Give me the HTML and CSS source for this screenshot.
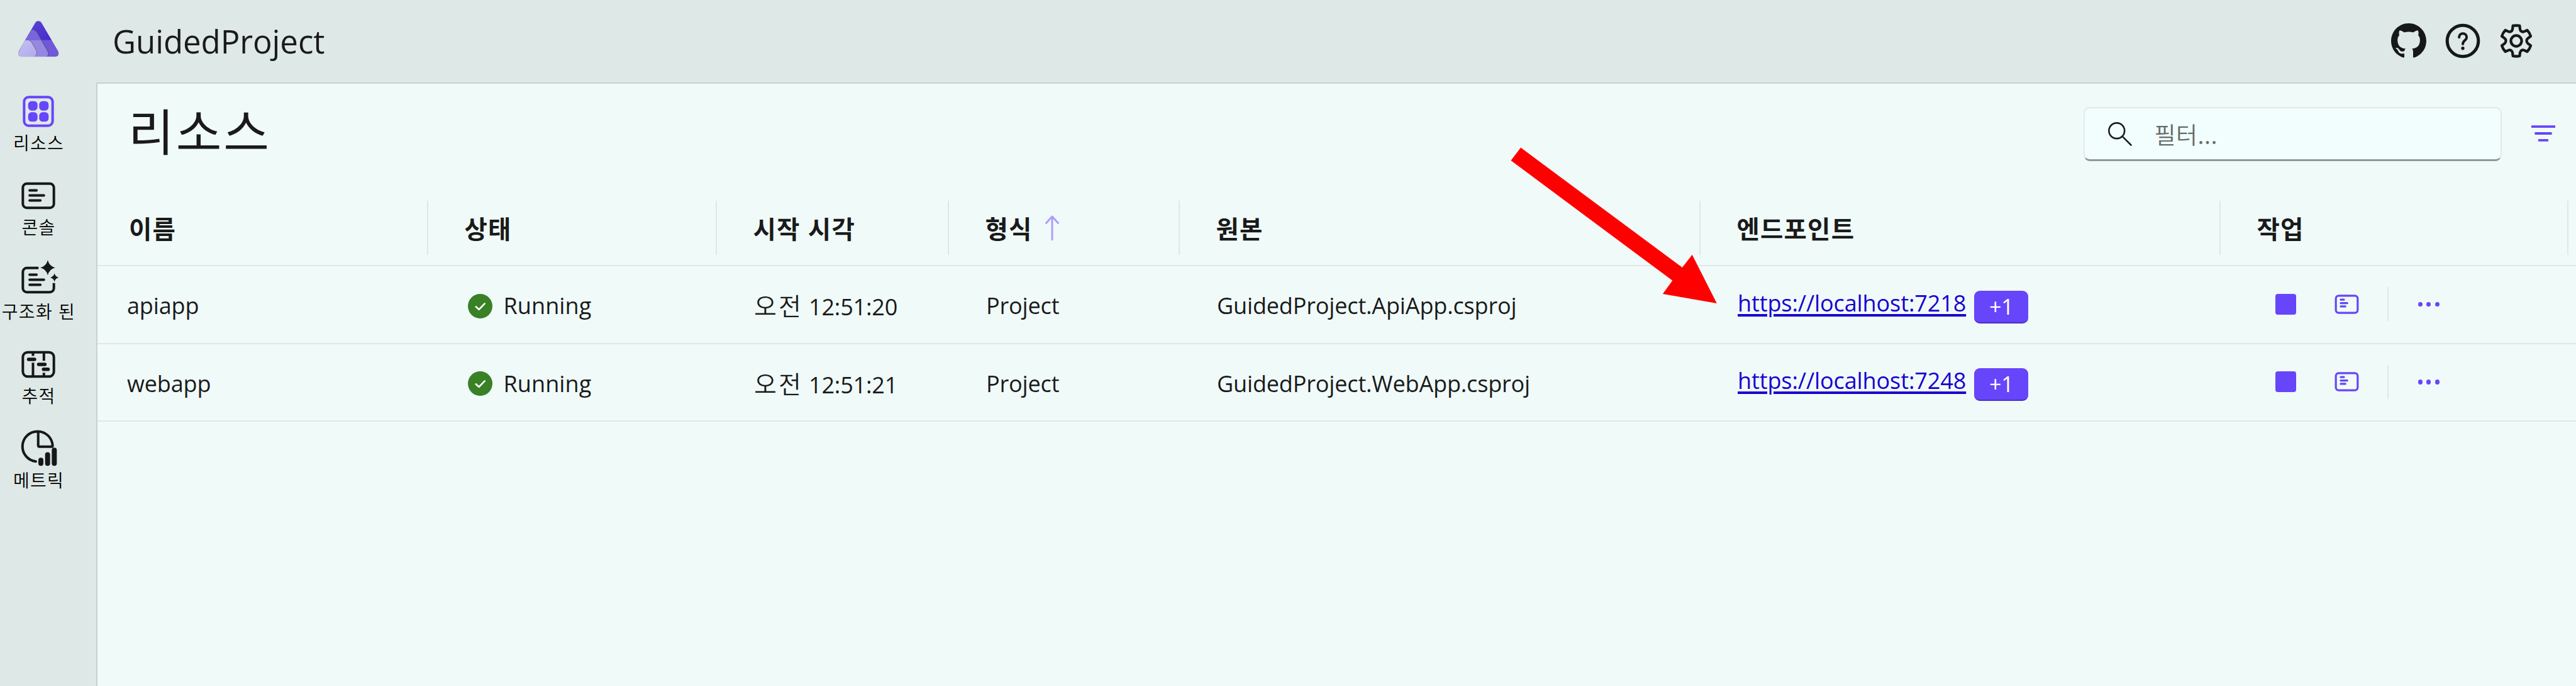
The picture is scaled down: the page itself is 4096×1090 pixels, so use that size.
FILE: index.html
```
<!DOCTYPE html>
<html lang="ko">
<head>
<meta charset="utf-8">
<title>GuidedProject</title>
<link rel="stylesheet" href="styles.css">
</head>
<body>
<svg class="defs" aria-hidden="true">
  <symbol id="log" viewBox="0 0 24 24">
    <rect x="2.75" y="4.75" width="18.5" height="14.5" rx="2.4"/>
    <path d="M6.9 8.1h2.7M6.9 11h5.500M6.900 13.800h3.900"/>
  </symbol>
  <symbol id="check" viewBox="0 0 20 20">
    <circle cx="10" cy="10" r="10" fill="#3a8026"/>
    <path d="M6.5 10.4l2.5 2.3 4.7-4.8" fill="none" stroke="#fff" stroke-width="1.35" stroke-linecap="round" stroke-linejoin="round"/>
  </symbol>
</svg>
<div class="app">
  <nav class="sidebar">
    <div class="logo">
      <svg viewBox="0 0 270 255">
        <defs>
          <linearGradient id="ga" x1="0" y1="0" x2="1" y2="1"><stop offset="0" stop-color="#6049d6"/><stop offset="1" stop-color="#4326c8"/></linearGradient>
          <linearGradient id="gb" x1="0" y1="0" x2="1" y2="1"><stop offset="0" stop-color="#c6c3f1"/><stop offset="1" stop-color="#b0a8ea"/></linearGradient>
          <clipPath id="tri"><path d="M135 33q11 0 17 11L236 187q12 26-14 30H50q-26-4-15-30L118 44q6-11 17-11z"/></clipPath>
        </defs>
        <g clip-path="url(#tri)">
          <rect x="20" y="25" width="230" height="107" fill="url(#ga)"/>
          <rect x="20" y="132" width="230" height="90" fill="#6f59d7"/>
          <path d="M60 120L90 82q22-10 37 8l24 42H40z" fill="#7966d8"/>
          <path d="M40 132h111l33 58q8 18-6 30H30z" fill="#9687e1"/>
          <path d="M112 80q10 1 17 12l55 98q7 17-6 27" fill="none" stroke="#4e4496" stroke-width="3"/>
          <path d="M20 220l45-85q22-8 36 10l25 42q6 18-10 32z" fill="url(#gb)"/>
          <path d="M90 133q9 4 14 14l23 42q4 16-9 28" fill="none" stroke="#6a63a4" stroke-width="3"/>
        </g>
      </svg>
    </div>
    <a class="nav active">
      <svg viewBox="0 0 24 24"><rect x="3.5" y="3.5" width="17" height="17" rx="2.7"/><g class="solid"><rect x="5.9" y="5.9" width="5.6" height="5.6" rx="2"/><rect x="12.5" y="5.9" width="5.6" height="5.6" rx="2"/><rect x="5.9" y="12.5" width="5.6" height="5.6" rx="2"/><rect x="12.5" y="12.5" width="5.6" height="5.6" rx="2"/></g></svg>
      <span>리소스</span>
    </a>
    <a class="nav">
      <svg viewBox="0 0 24 24"><rect x="2.75" y="4.75" width="18.5" height="14.5" rx="2.4"/><path d="M6.8 8.8h4.1M6.8 11.8h8.5M6.8 14.8h6.4"/></svg>
      <span>콘솔</span>
    </a>
    <a class="nav">
      <svg viewBox="0 0 24 24"><path class="butt" d="M12.1 4.75H5.15a2.4 2.4 0 0 0-2.4 2.4v9.7a2.4 2.4 0 0 0 2.4 2.4h13.7a2.4 2.4 0 0 0 2.4-2.4V13.8"/><path d="M6.8 8.8h4.1M6.8 11.8h8.5M6.8 14.8h6.4"/><path class="solid" d="M17.6.1Q18.5 3.7 22 4.6Q18.5 5.5 17.6 9.1Q16.7 5.5 13.2 4.6Q16.7 3.7 17.6.1zM21.6 8Q22.1 10 24.1 10.5Q22.1 11 21.6 13Q21.1 11 19.1 10.5Q21.1 10 21.6 8z"/></svg>
      <span>구조화 된</span>
    </a>
    <a class="nav">
      <svg viewBox="0 0 24 24"><rect x="2.75" y="4.75" width="18.5" height="14.5" rx="2.9"/><path class="butt" d="M8.8 4.5v2.4M8.8 11v8.5M15.3 4.5v5.3M15.3 17v2.5"/><path class="thick" d="M6.2 9h3.5M12.2 12h3.7M15.1 14.9h2.7"/></svg>
      <span>추적</span>
    </a>
    <a class="nav">
      <svg viewBox="0 0 24 24"><path d="M10.5 19.6A9 9 0 1 1 20.5 10.1q0 .7-.7.7h-7.1q-.8 0-.8-.8V1.8"/><path class="bars" d="M13.5 18.8v1.9M17.5 15.6v5.1M21.5 12.8v7.9"/></svg>
      <span>메트릭</span>
    </a>
  </nav>
  <div class="column">
    <header class="topbar">
      <div class="brand">GuidedProject</div>
      <div class="tools">
        <svg class="github" viewBox="0 0 16 16"><path d="M8 0C3.58 0 0 3.58 0 8c0 3.54 2.29 6.53 5.47 7.59.4.07.55-.17.55-.38 0-.19-.01-.82-.01-1.49-2.01.37-2.53-.49-2.69-.94-.09-.23-.48-.94-.82-1.13-.28-.15-.68-.52-.01-.53.63-.01 1.08.58 1.23.82.72 1.21 1.87.87 2.33.66.07-.52.28-.87.51-1.07-1.78-.2-3.64-.89-3.64-3.95 0-.87.31-1.59.82-2.15-.08-.2-.36-1.02.08-2.12 0 0 .67-.21 2.2.82.64-.18 1.32-.27 2-.27s1.36.09 2 .27c1.53-1.04 2.2-.82 2.2-.82.44 1.1.16 1.92.08 2.12.51.56.82 1.27.82 2.15 0 3.07-1.87 3.75-3.65 3.95.29.25.54.73.54 1.48 0 1.07-.01 1.93-.01 2.2 0 .21.15.46.55.38A8.01 8.01 0 0 0 16 8c0-4.42-3.58-8-8-8z"/></svg>
        <svg class="line help" viewBox="0 0 24 24"><circle cx="12" cy="12" r="9.3"/><path d="M9.8 9.8a2.25 2.25 0 1 1 4.5 0c0 1.9-2.3 2-2.3 4.1"/><circle class="dot" cx="12" cy="16.4" r="1"/></svg>
        <svg class="line gear" viewBox="0 0 24 24"><path d="M12.012 2.75c.734.008 1.4.093 2.0.223l.25 2.056a1.75 1.75 0 0 0 2.427 1.4l1.85-.815a9.3 9.3 0 0 1 2.1 3.6l-1.641 1.216a1.95 1.95 0 0 0 0 3.14l1.643 1.2a9.3 9.3 0 0 1-2.1 3.6l-1.857-.8a1.75 1.75 0 0 0-2.426 1.4l-.25 2.0a9.5 9.5 0 0 1-4.0 0l-.25-2.0a1.75 1.75 0 0 0-2.425-1.4l-1.856.8a9.3 9.3 0 0 1-2.1-3.6l1.643-1.2a1.95 1.95 0 0 0 0-3.14l-1.643-1.2a9.3 9.3 0 0 1 2.1-3.6l1.85.8a1.75 1.75 0 0 0 2.43-1.4l.25-2.056c.7-.15 1.3-.223 2.001-.223z"/><circle cx="12" cy="12" r="3.2"/></svg>
      </div>
    </header>
    <main class="main">
      <div class="pagehead">
        <h1>리소스</h1>
        <div class="filters">
          <label class="search">
            <svg viewBox="0 0 24 24"><circle cx="9" cy="9" r="7.1"/><path d="M14.2 14.2L22 22"/></svg>
            <span>필터...</span>
          </label>
          <svg class="filter" viewBox="0 0 40 26"><path d="M0 1.500h40M5.700 13h28.600M11.600 24.500h16.800"/></svg>
        </div>
      </div>
      <div class="row head">
        <div>이름</div>
        <div>상태</div>
        <div>시작 시각</div>
        <div><span>형식</span><svg class="sort" viewBox="0 0 22 40"><path d="M11 39V2M1.5 12.500L11 2l9.500 10.500"/></svg></div>
        <div>원본</div>
        <div>엔드포인트</div>
        <div>작업</div>
      </div>
      <div class="row item">
        <div>apiapp</div>
        <div><svg class="status"><use href="#check"/></svg><span class="running">Running</span></div>
        <div><span><span class="ko">오전</span> 12:51:20</span></div>
        <div>Project</div>
        <div>GuidedProject.ApiApp.csproj</div>
        <div><a class="link">https://localhost:7218</a><span class="badge">+1</span></div>
        <div class="actions"><i class="stop"></i><svg class="log"><use href="#log"/></svg><i class="sep"></i><i class="dots"><b></b><b></b><b></b></i></div>
      </div>
      <div class="row item">
        <div>webapp</div>
        <div><svg class="status"><use href="#check"/></svg><span class="running">Running</span></div>
        <div><span><span class="ko">오전</span> 12:51:21</span></div>
        <div>Project</div>
        <div>GuidedProject.WebApp.csproj</div>
        <div><a class="link">https://localhost:7248</a><span class="badge">+1</span></div>
        <div class="actions"><i class="stop"></i><svg class="log"><use href="#log"/></svg><i class="sep"></i><i class="dots"><b></b><b></b><b></b></i></div>
      </div>
    </main>
  </div>
</div>
<svg class="pointer" viewBox="0 0 4400 1171"><path d="M2597.600 252L2873.500 456.700L2890.400 434.700L2932.500 517.700L2840.200 501.700L2856.700 479L2580.800 274z"/></svg>
</body>
</html>
```
FILE: styles.css
```
* { box-sizing: border-box; }

body {
  margin: 0;
  background: #dee8e6;
  color: #1a1a1a;
  font-family: "Open Sans", "Noto Sans CJK KR", sans-serif;
  font-size: 36px;
  overflow: hidden;
}

.defs { position: absolute; width: 0; height: 0; }

.app { display: flex; width: 4096px; height: 1090px; }

/* sidebar */
.sidebar { width: 153px; flex: none; }
.logo { height: 130px; padding: 23px 0 0 19px; }
.logo svg { display: block; width: 84px; height: 79px; }

.nav {
  width: 122px;
  height: 134px;
  padding-top: 15px;
  display: flex;
  flex-direction: column;
  align-items: center;
  white-space: nowrap;
  font: 350 28px/34px "Noto Sans CJK KR", sans-serif;
  letter-spacing: 1.300px;
  color: #000;
}
.nav svg {
  width: 64px;
  height: 64px;
  overflow: visible;
  fill: none;
  stroke: #161818;
  stroke-width: 1.5;
  stroke-linecap: round;
  stroke-linejoin: round;
}
.nav span { padding-left: 1px; }
.nav .butt { stroke-linecap: butt; }
.nav .thick { stroke-width: 2.1; }
.nav .bars { stroke-width: 3; }
.nav .solid { fill: #161818; stroke: none; }
.nav.active svg { stroke: #6745fa; }
.nav.active .solid { fill: #6745fa; }

/* top bar */
.column { flex: 1; display: flex; flex-direction: column; min-width: 0; }
.topbar {
  height: 131px;
  flex: none;
  display: flex;
  justify-content: space-between;
  padding: 0 63px 0 26px;
}
.brand { font-size: 51px; line-height: 131px; letter-spacing: -.1px; }
.tools { display: flex; align-items: center; gap: 21.500px; height: 129px; }
.tools svg { width: 64px; height: 64px; overflow: visible; fill: #161818; }
.tools .github { width: 56px; height: 56px; margin-right: 4px; }
.tools .line { fill: none; stroke: #161818; stroke-width: 1.600; stroke-linecap: round; stroke-linejoin: round; }
.tools .help { stroke-width: 1.900; }
.tools .help path { stroke-width: 1.500; }
.tools .line .dot { fill: #161818; stroke: none; }

/* page */
.main {
  flex: 1;
  background: #f0faf9;
  border: solid #c9d2d0;
  border-width: 2px 0 0 2px;
}
.pagehead { height: 186px; display: flex; justify-content: space-between; padding: 0 33px 0 49px; }
h1 { margin: 0; font: 400 79px/146px "Noto Sans CJK KR", sans-serif; letter-spacing: 3px; }
.filters { display: flex; gap: 47px; padding-top: 37px; }
.search {
  width: 665px;
  height: 86px;
  display: flex;
  align-items: center;
  gap: 33.500px;
  padding-left: 35px;
  background: #f2fefd;
  border: 2px solid #e0eae8;
  border-bottom: 3px solid #8f9a98;
  border-radius: 10px;
  color: #666c6b;
  font: 350 37px/50px "Noto Sans CJK KR", sans-serif;
  letter-spacing: .500px;
}
.search svg { width: 42px; height: 42px; fill: none; stroke: #1c1e1e; stroke-width: 1.500; stroke-linecap: round; }
.filter { width: 38px; height: 26px; margin-top: 29px; overflow: visible; fill: none; stroke: #6745fa; stroke-width: 4; }

/* grid */
.row {
  display: grid;
  grid-template-columns: 526px 459px 369px 367px 828px 827px 553px 1fr;
  border-bottom: 2px solid #dfe8e7;
}
.row > div { display: flex; align-items: center; white-space: nowrap; }
.head { height: 104px; padding-bottom: 16px; font: 700 39.500px/60px "Noto Sans CJK KR", sans-serif; letter-spacing: 1.200px; }
.head > div { border-right: 2px solid #e0e8e7; padding: 0 0 1px 57.500px; }
.head > div:first-child { padding-left: 50px; }
.sort { width: 22px; height: 40px; margin: 1px 0 0 20px; fill: none; stroke: #ae9dfa; stroke-width: 3; stroke-linecap: round; stroke-linejoin: round; }
.item { height: 123.500px; line-height: 50px; letter-spacing: -.15px; }
.item > div { padding: 5px 0 0 59px; }
.item > div:first-child { padding-left: 47px; }
.item > div:nth-child(2) { padding-left: 62.500px; }
.status { width: 39px; height: 39px; margin-right: 18px; }
.running { letter-spacing: .1px; }
.ko { font: 350 39px/50px "Noto Sans CJK KR", sans-serif; letter-spacing: 3px; }
.link { margin-bottom: 9px; letter-spacing: -.1px; color: #1700cf; text-decoration: underline; text-decoration-thickness: 3.500px; text-underline-offset: 4px; }
.badge {
  width: 86px;
  height: 52px;
  margin: 3px 0 0 13px;
  display: flex;
  align-items: center;
  justify-content: center;
  background: #6745fa;
  border-bottom: 2px solid #4a30c4;
  border-radius: 9px;
  color: #fff;
  font-size: 34px;
}
.item > .actions { padding: 0 0 1px 87px; }
.stop { width: 33px; height: 33px; border-radius: 4px; background: #6745fa; }
.log { width: 45px; height: 45px; margin-left: 58px; fill: none; stroke: #6745fa; stroke-width: 1.700; stroke-linecap: round; }
.sep { width: 2px; height: 54px; margin-left: 42px; background: #e0e8e7; }
.dots { display: flex; gap: 6.500px; margin-left: 46.500px; }
.dots b { width: 7px; height: 7.500px; border-radius: 50%; background: #6745fa; }

/* callout arrow laid over the page */
.pointer { position: absolute; left: 0; top: 0; width: 4096px; height: 1090px; fill: #f00; }
```
